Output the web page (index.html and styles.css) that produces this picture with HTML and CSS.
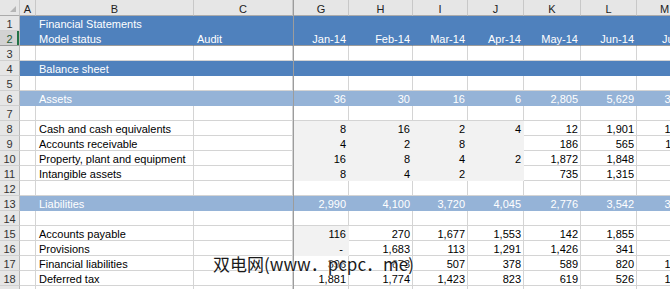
FILE: index.html
```html
<!DOCTYPE html>
<html>
<head>
<meta charset="utf-8">
<link rel="stylesheet" href="styles.css">
</head>
<body>
<div class="sheet">
  <div class="row hdr">
    <div class="corner"><span class="tri"></span></div>
    <div>A</div><div>B</div><div>C</div><div class="fz"></div>
    <div>G</div><div>H</div><div>I</div><div>J</div><div>K</div><div>L</div><div>M</div>
  </div>
  <div class="row band">
    <div class="rh">1</div><div class="c"></div><div class="c">Financial Statements</div><div class="c"></div><div class="fz"></div>
    <div class="c"></div><div class="c"></div><div class="c"></div><div class="c"></div><div class="c"></div><div class="c"></div><div class="c"></div>
  </div>
  <div class="row band frozen">
    <div class="rh sel">2</div><div class="c"></div><div class="c">Model status</div><div class="c">Audit</div><div class="fz"></div>
    <div class="c n">Jan-14</div><div class="c n">Feb-14</div><div class="c n">Mar-14</div><div class="c n">Apr-14</div><div class="c n">May-14</div><div class="c n">Jun-14</div><div class="c n">Jul-14</div>
  </div>
  <div class="row">
    <div class="rh">3</div><div class="c"></div><div class="c"></div><div class="c"></div><div class="fz"></div>
    <div class="c"></div><div class="c"></div><div class="c"></div><div class="c"></div><div class="c"></div><div class="c"></div><div class="c"></div>
  </div>
  <div class="row band">
    <div class="rh">4</div><div class="c"></div><div class="c">Balance sheet</div><div class="c"></div><div class="fz"></div>
    <div class="c"></div><div class="c"></div><div class="c"></div><div class="c"></div><div class="c"></div><div class="c"></div><div class="c"></div>
  </div>
  <div class="row">
    <div class="rh">5</div><div class="c"></div><div class="c"></div><div class="c"></div><div class="fz"></div>
    <div class="c"></div><div class="c"></div><div class="c"></div><div class="c"></div><div class="c"></div><div class="c"></div><div class="c"></div>
  </div>
  <div class="row band light">
    <div class="rh">6</div><div class="c"></div><div class="c">Assets</div><div class="c"></div><div class="fz"></div>
    <div class="c n">36</div><div class="c n">30</div><div class="c n">16</div><div class="c n">6</div><div class="c n">2,805</div><div class="c n">5,629</div><div class="c n">3,214</div>
  </div>
  <div class="row">
    <div class="rh">7</div><div class="c"></div><div class="c"></div><div class="c"></div><div class="fz"></div>
    <div class="c"></div><div class="c"></div><div class="c"></div><div class="c"></div><div class="c"></div><div class="c"></div><div class="c"></div>
  </div>
  <div class="row">
    <div class="rh">8</div><div class="c"></div><div class="c">Cash and cash equivalents</div><div class="c"></div><div class="fz"></div>
    <div class="c n f">8</div><div class="c n f">16</div><div class="c n f">2</div><div class="c n f">4</div><div class="c n">12</div><div class="c n">1,901</div><div class="c n">1,402</div>
  </div>
  <div class="row">
    <div class="rh">9</div><div class="c"></div><div class="c">Accounts receivable</div><div class="c"></div><div class="fz"></div>
    <div class="c n f">4</div><div class="c n f">2</div><div class="c n f">8</div><div class="c n f"></div><div class="c n">186</div><div class="c n">565</div><div class="c n">1,118</div>
  </div>
  <div class="row">
    <div class="rh">10</div><div class="c"></div><div class="c">Property, plant and equipment</div><div class="c"></div><div class="fz"></div>
    <div class="c n f">16</div><div class="c n f">8</div><div class="c n f">4</div><div class="c n f">2</div><div class="c n">1,872</div><div class="c n">1,848</div><div class="c n"></div>
  </div>
  <div class="row">
    <div class="rh">11</div><div class="c"></div><div class="c">Intangible assets</div><div class="c"></div><div class="fz"></div>
    <div class="c n f">8</div><div class="c n f">4</div><div class="c n f">2</div><div class="c n f"></div><div class="c n">735</div><div class="c n">1,315</div><div class="c n"></div>
  </div>
  <div class="row">
    <div class="rh">12</div><div class="c"></div><div class="c"></div><div class="c"></div><div class="fz"></div>
    <div class="c"></div><div class="c"></div><div class="c"></div><div class="c"></div><div class="c"></div><div class="c"></div><div class="c"></div>
  </div>
  <div class="row band light">
    <div class="rh">13</div><div class="c"></div><div class="c">Liabilities</div><div class="c"></div><div class="fz"></div>
    <div class="c n">2,990</div><div class="c n">4,100</div><div class="c n">3,720</div><div class="c n">4,045</div><div class="c n">2,776</div><div class="c n">3,542</div><div class="c n">3,310</div>
  </div>
  <div class="row">
    <div class="rh">14</div><div class="c"></div><div class="c"></div><div class="c"></div><div class="fz"></div>
    <div class="c"></div><div class="c"></div><div class="c"></div><div class="c"></div><div class="c"></div><div class="c"></div><div class="c"></div>
  </div>
  <div class="row">
    <div class="rh">15</div><div class="c"></div><div class="c">Accounts payable</div><div class="c"></div><div class="fz"></div>
    <div class="c n f">116</div><div class="c n">270</div><div class="c n">1,677</div><div class="c n">1,553</div><div class="c n">142</div><div class="c n">1,855</div><div class="c n"></div>
  </div>
  <div class="row">
    <div class="rh">16</div><div class="c"></div><div class="c">Provisions</div><div class="c"></div><div class="fz"></div>
    <div class="c n f dash">-</div><div class="c n">1,683</div><div class="c n">113</div><div class="c n">1,291</div><div class="c n">1,426</div><div class="c n">341</div><div class="c n"></div>
  </div>
  <div class="row">
    <div class="rh">17</div><div class="c"></div><div class="c">Financial liabilities</div><div class="c"></div><div class="fz"></div>
    <div class="c n">396</div><div class="c n">673</div><div class="c n">507</div><div class="c n">378</div><div class="c n">589</div><div class="c n">820</div><div class="c n">1,207</div>
  </div>
  <div class="row">
    <div class="rh">18</div><div class="c"></div><div class="c">Deferred tax</div><div class="c"></div><div class="fz"></div>
    <div class="c n">1,881</div><div class="c n">1,774</div><div class="c n">1,423</div><div class="c n">823</div><div class="c n">619</div><div class="c n">526</div><div class="c n">1,109</div>
  </div>
  <div class="row">
    <div class="rh">19</div><div class="c"></div><div class="c"></div><div class="c"></div><div class="fz"></div>
    <div class="c"></div><div class="c"></div><div class="c"></div><div class="c"></div><div class="c"></div><div class="c"></div><div class="c"></div>
  </div>
  <div class="wm">双电网(www．pcpc．me)</div>
</div>
</body>
</html>
```
FILE: styles.css
```css
* { box-sizing: border-box; }
html, body { margin: 0; padding: 0; background: #fff; overflow: hidden; }
body {
  font-family: "Liberation Sans", Arial, sans-serif;
  font-size: 11px;
  color: #000;
}
.sheet { position: relative; width: 693px; }
.row {
  display: grid;
  grid-template-columns: 20px 16px 158px 99px 1px 55px 64px 55px 56px 57px 56px 56px;
  height: 15px;
}
.row > div {
  height: 15px;
  border-right: 1px solid #d4d4d4;
  border-bottom: 1px solid #d4d4d4;
  line-height: 13px;
  padding: 2px 3px 0;
  white-space: nowrap;
}
.row > .fz { background: #9c9c9c; border: 0; padding: 0; }
.row > .n { text-align: right; padding: 2px 2px 0; }
.row > .n:last-child { padding-right: 0; }
.row > .dash { padding-right: 5px; }
.row > .f { background: #f2f2f2; border-color: #f2f2f2; }

.row > .rh {
  background: #e6e6e6;
  color: #333;
  text-align: center;
  padding: 2px 0 0;
  border-right-color: #b9b9b9;
  border-bottom-color: #d0d0d0;
}
.row > .rh.sel {
  background: #d2d2d2;
  color: #1f5c37;
  box-shadow: inset -2px 0 0 #217346;
}

.hdr { height: 16px; }
.hdr > div {
  height: 16px;
  background: #e6e6e6;
  color: #222;
  text-align: center;
  line-height: 14px;
  padding: 2px 0 0;
  border-right-color: #c8c8c8;
  border-bottom-color: #ababab;
}
.hdr > .corner {
  display: flex;
  justify-content: flex-end;
  align-items: flex-end;
  padding: 0 3px 3px 0;
}
.tri {
  width: 0;
  height: 0;
  border-left: 6px solid transparent;
  border-bottom: 6px solid #b5b5b5;
}

.band > .c { background: #4f81bd; border-color: #4f81bd; color: #fff; }
.band.light > .c { background: #95b3d7; border-color: #95b3d7; }
.row.frozen > div { border-bottom-color: #9c9c9c; }

.wm {
  position: absolute;
  left: 213px;
  top: 255px;
  font-family: "Noto Sans CJK SC", sans-serif;
  font-size: 17px;
  line-height: 18px;
  color: #1a1a1a;
  white-space: nowrap;
  text-shadow: 0 0 2px #fff, 0 0 2px #fff;
}
```
